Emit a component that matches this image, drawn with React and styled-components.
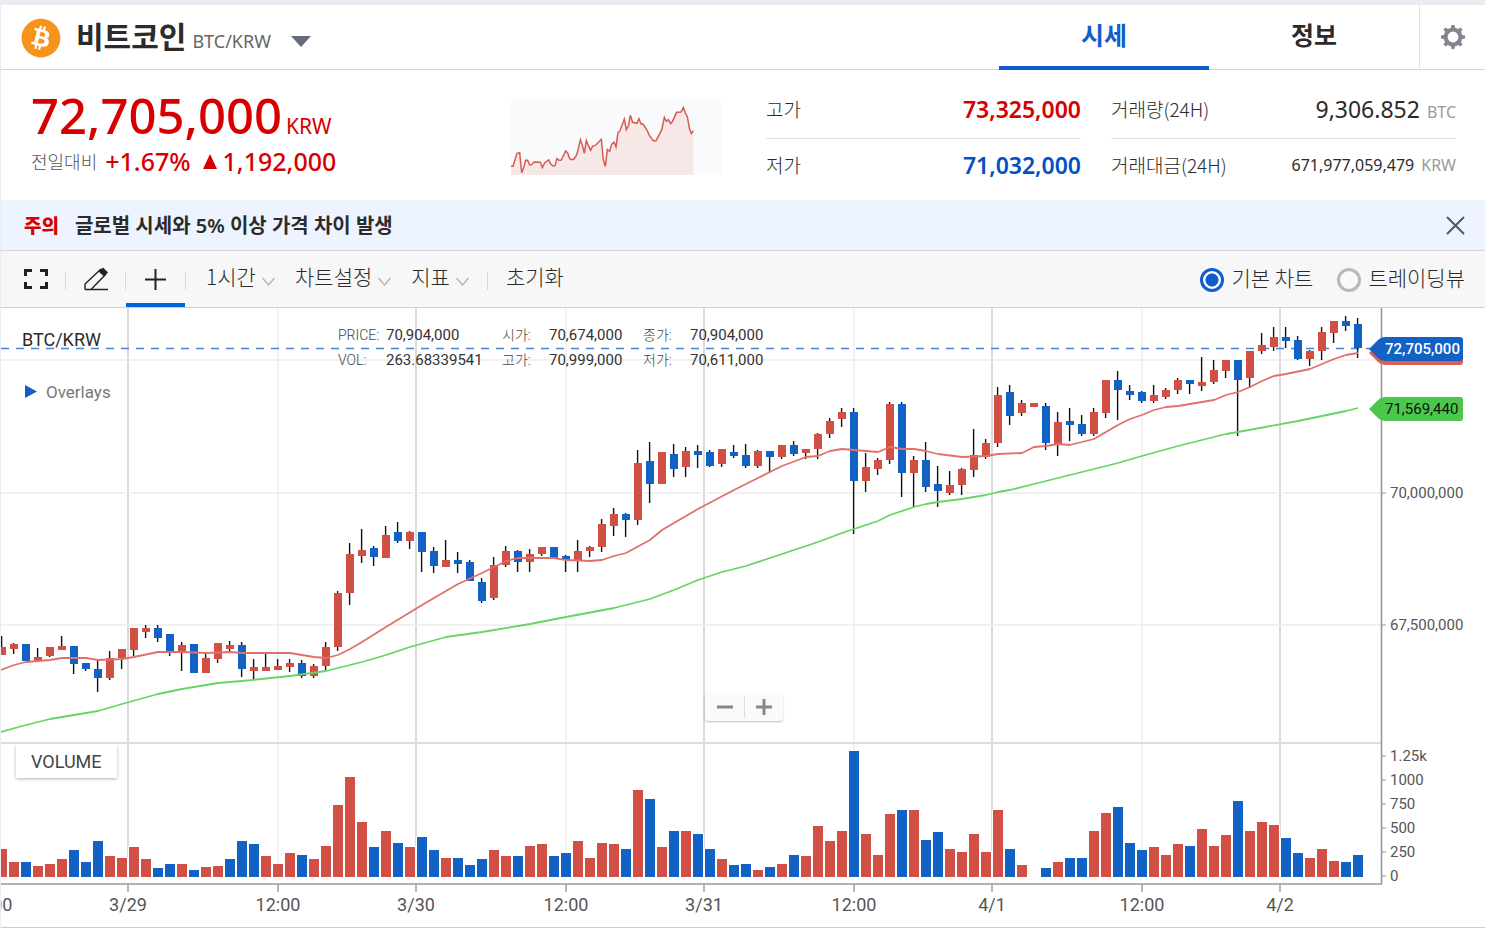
import React, { useState } from "react";
import styled, { createGlobalStyle } from "styled-components";
import { FaBitcoin } from "react-icons/fa";

const RED = "#d24f45";
const BLUE = "#1261c4";

const GlobalStyle = createGlobalStyle`
  * {
    box-sizing: border-box;
  }
  body {
    margin: 0;
    background: #e9ecf1;
    color: #2b2b2b;
    font-family: "Noto Sans", "Noto Sans CJK KR", sans-serif;
  }
  button, select, input {
    font: inherit;
    color: inherit;
    margin: 0;
  }
  button {
    padding: 0;
    border: 0;
    background: none;
    cursor: pointer;
  }
`;

const Page = styled.div`
  padding: 5px 0 0 1px;
`;

const Panel = styled.main`
  background: #fff;
  border-bottom: 1px solid #ccc;
`;

const Header = styled.header`
  display: flex;
  height: 65px;
  border-bottom: 1px solid #d4d4d6;
`;

const Coin = styled.div`
  flex: 1;
  display: flex;
  align-items: center;
  padding: 2px 0 0 20px;

  svg {
    flex: none;
  }
`;

const CoinName = styled.h1`
  display: flex;
  align-items: baseline;
  gap: 6px;
  margin: 0 0 0 15px;
  font: 700 30px/40px "Noto Sans CJK KR", sans-serif;

  span {
    font: 400 18px/40px "Noto Sans", sans-serif;
    color: #666;
  }
`;

const CoinMenu = styled.button`
  display: flex;
  margin: 6px 0 0 20px;
`;

const Tabs = styled.nav`
  display: flex;
`;

const Tab = styled.a`
  width: 210px;
  height: 65px;
  font: 700 25px/59px "Noto Sans CJK KR", sans-serif;
  text-align: center;
  text-decoration: none;
  color: ${({ $active }) => ($active ? "#115dcb" : "#2b2b2b")};
  border-bottom: ${({ $active }) => ($active ? "4px solid #115dcb" : "0")};
`;

const Settings = styled.button`
  display: flex;
  align-items: center;
  justify-content: center;
  width: 66px;
  height: 63px;
  border-left: 1px solid #dfe0e6;
`;

const Summary = styled.section`
  display: flex;
  height: 130px;
  padding: 0 29px 0 30px;
`;

const Price = styled.div`
  flex: 1;
  padding-top: 15px;
  color: #d60000;
`;

const PriceNow = styled.div`
  display: flex;
  align-items: baseline;
  gap: 4px;
  font-size: 49px;
  font-weight: 500;
  line-height: 60px;

  span {
    font-size: 21px;
    font-weight: 400;
    line-height: 24px;
  }
`;

const PriceChange = styled.div`
  display: flex;
  align-items: center;
  gap: 8px;
  font-size: 25px;
  font-weight: 500;
  line-height: 32px;

  span {
    font: 300 18px/32px "Noto Sans CJK KR", sans-serif;
    color: #555;
  }
  b {
    display: flex;
    align-items: center;
    gap: 5px;
    margin-left: 3px;
    font-weight: 500;
  }
`;

const Spark = styled.svg`
  width: 210px;
  height: 75px;
  margin: 30px 45px 0 0;
  background: #f9fafc;
`;

const Stats = styled.dl`
  width: ${({ $wide }) => ($wide ? "345px" : "315px")};
  margin: 13px 0 0 ${({ $wide }) => ($wide ? "30px" : "0")};
`;

const Stat = styled.div`
  display: flex;
  justify-content: space-between;
  height: 55px;

  & + & {
    border-top: 1px solid #dfe0e6;
  }
  dt {
    font: 300 19px/51px "Noto Sans CJK KR", sans-serif;
  }
  dd {
    margin: 0;
    font-size: ${({ $small }) => ($small ? "16px" : "23px")};
    font-weight: ${({ $color }) => ($color ? 600 : 400)};
    line-height: 53px;
    color: ${({ $color }) => $color || "#2b2b2b"};
  }
  i {
    margin-left: 7px;
    font-size: 16px;
    font-style: normal;
    color: #999;
  }
`;

const Notice = styled.section`
  display: flex;
  align-items: center;
  gap: 16px;
  height: 51px;
  padding: 0 20px 0 23px;
  background: #eef4ff;
  border-bottom: 1px solid #d4d7dd;
  font-size: 19px;
  font-weight: 700;
  line-height: 50px;

  strong {
    padding-top: 2px;
    color: #d60000;
  }
  p {
    flex: 1;
    margin: 0;
    padding-top: 2px;
    font-size: 20px;
    font-weight: 600;
  }
  button {
    display: flex;
  }
`;

const Toolbar = styled.div`
  display: flex;
  align-items: center;
  height: 57px;
  padding: 0 20px 0 5px;
  background: #f7f7f7;
  border-bottom: 1px solid #d0d0d0;
  font: 300 21px/32px "Noto Sans CJK KR", sans-serif;
`;

const Tool = styled.button`
  display: flex;
  align-items: center;
  justify-content: center;
  width: 59px;
  height: 56px;
  padding-top: ${({ $active }) => ($active ? "4px" : "0")};
  border-bottom: ${({ $active }) => ($active ? "4px solid #0062df" : "0")};
`;

const Divider = styled.span`
  width: 1px;
  height: 18px;
  margin: 4px ${({ $gap }) => $gap || "0"} 0 0;
  background: #d9d9d9;
`;

const Menu = styled.div`
  display: flex;
  align-items: center;
  gap: 6px;
  margin-right: 20px;
  padding-bottom: 6px;

  select {
    appearance: none;
    padding: 0;
    border: 0;
    background: none;
    line-height: 32px;
  }
  svg {
    margin-top: 11px;
  }
`;

const MenuButton = styled.button`
  display: flex;
  align-items: center;
  gap: 6px;
  margin-right: ${({ $last }) => ($last ? "18px" : "20px")};
  padding-bottom: 6px;

  svg {
    margin-top: 11px;
  }
`;

const ChartTypes = styled.fieldset`
  flex: 1;
  display: flex;
  justify-content: flex-end;
  gap: 24px;
  margin: 0;
  padding: 0;
  border: 0;

  label {
    display: flex;
    align-items: center;
    gap: 7px;
  }
  span {
    padding-bottom: 4px;
  }
  input {
    appearance: none;
    width: 24px;
    height: 24px;
    margin-top: 2px;
    border: 3px solid #b9b9b9;
    border-radius: 50%;
    background: #f9f9f9;
  }
  input:checked {
    border-color: #115dcb;
    background: radial-gradient(circle, #115dcb 0 6px, #fff 7px);
  }
`;

const ChartArea = styled.section`
  position: relative;
  font-family: Roboto, "Noto Sans CJK KR", sans-serif;

  > svg {
    display: block;
    width: 100%;
    height: auto;
  }
`;

const ChartTitle = styled.div`
  position: absolute;
  left: 21px;
  top: 20px;
  font-size: 18px;
  line-height: 24px;
`;

const Overlays = styled.button`
  position: absolute;
  left: 24px;
  top: 72px;
  display: flex;
  align-items: center;
  gap: 9px;
  font-size: 17px;
  line-height: 24px;
  color: #777;
`;

const Readout = styled.dl`
  position: absolute;
  left: 337px;
  top: 15px;
  display: grid;
  grid-template-columns: 48px 116px 47px 94px 47px auto;
  margin: 0;
  line-height: 25px;

  dt {
    font-size: 14px;
    font-weight: 300;
    color: #444;
  }
  dd {
    margin: 0;
    font-size: 15px;
    color: #333;
  }
`;

const VolumeLabel = styled.div`
  position: absolute;
  left: 15px;
  top: 437px;
  padding: 0 15px;
  background: #fff;
  box-shadow: 0 1px 3px rgba(0, 0, 0, 0.3);
  clip-path: inset(0 -4px -4px -4px);
  font-size: 18px;
  line-height: 33px;
  color: #444;
`;

const Zoom = styled.div`
  position: absolute;
  left: 704px;
  top: 385px;
  display: flex;
  padding: 3px 0;
  border-radius: 3px;
  background: #fafafa;
  box-shadow: 0 1px 2px rgba(0, 0, 0, 0.25);

  button {
    display: flex;
    align-items: center;
    justify-content: center;
    width: 39px;
    height: 22px;
  }
  button + button {
    border-left: 1px solid #ddd;
  }
`;

// one entry per hour: high, body top, body bottom, low, direction
const candles = [
  [636, 647, 655, 655, "r"], [643, 644, 649, 654, "r"], [644, 644, 661, 661, "b"],
  [648, 657, 661, 661, "r"], [647, 647, 656, 657, "r"], [636, 646, 650, 650, "r"],
  [646, 646, 664, 674, "b"], [663, 663, 669, 671, "b"], [660, 669, 678, 692, "b"],
  [651, 658, 678, 680, "r"], [649, 649, 658, 669, "r"], [628, 628, 650, 656, "r"],
  [625, 628, 632, 638, "r"], [625, 628, 638, 642, "b"], [634, 634, 652, 656, "b"],
  [642, 645, 652, 671, "r"], [644, 644, 673, 673, "b"], [653, 658, 673, 673, "r"],
  [643, 643, 659, 663, "r"], [641, 645, 649, 652, "r"], [642, 645, 669, 677, "b"],
  [659, 667, 671, 679, "r"], [653, 667, 671, 671, "r"], [659, 666, 670, 670, "r"],
  [659, 663, 667, 672, "r"], [660, 663, 676, 678, "b"], [664, 666, 676, 678, "r"],
  [642, 647, 666, 671, "r"], [591, 593, 647, 651, "r"], [543, 554, 593, 605, "r"],
  [529, 550, 556, 563, "r"], [546, 548, 557, 566, "b"], [526, 535, 558, 558, "r"],
  [522, 532, 541, 543, "b"], [531, 532, 541, 549, "r"], [532, 532, 552, 572, "b"],
  [547, 551, 566, 573, "b"], [540, 560, 567, 567, "r"], [552, 560, 564, 573, "b"],
  [560, 562, 581, 581, "b"], [578, 582, 601, 603, "b"], [557, 565, 598, 600, "r"],
  [546, 551, 565, 567, "r"], [550, 551, 562, 572, "b"], [549, 554, 562, 572, "r"],
  [547, 547, 554, 556, "r"], [547, 547, 558, 558, "b"], [555, 556, 560, 572, "b"],
  [540, 551, 561, 572, "r"], [546, 547, 551, 557, "r"], [519, 524, 547, 552, "r"],
  [508, 514, 526, 536, "r"], [513, 514, 520, 537, "b"], [450, 463, 520, 525, "r"],
  [442, 461, 484, 503, "b"], [452, 452, 484, 484, "r"], [444, 454, 469, 477, "b"],
  [447, 451, 467, 477, "r"], [445, 451, 455, 468, "b"], [450, 452, 466, 467, "b"],
  [449, 449, 464, 467, "r"], [445, 452, 456, 458, "b"], [444, 455, 466, 468, "b"],
  [450, 451, 466, 468, "r"], [451, 451, 457, 472, "b"], [445, 445, 457, 459, "r"],
  [441, 445, 454, 456, "b"], [449, 449, 453, 459, "r"], [433, 434, 449, 459, "r"],
  [418, 421, 434, 438, "r"], [408, 412, 419, 427, "r"], [408, 412, 481, 534, "b"],
  [453, 467, 481, 492, "r"], [458, 460, 469, 475, "r"], [402, 404, 460, 464, "r"],
  [402, 404, 473, 497, "b"], [456, 460, 473, 507, "r"], [442, 460, 487, 492, "b"],
  [466, 484, 491, 507, "b"], [471, 485, 493, 495, "r"], [468, 469, 485, 495, "r"],
  [429, 455, 470, 477, "r"], [439, 443, 457, 459, "r"], [387, 395, 443, 447, "r"],
  [385, 392, 416, 425, "b"], [400, 403, 413, 416, "r"], [403, 403, 407, 407, "r"],
  [403, 406, 443, 450, "b"], [412, 422, 444, 456, "r"], [408, 421, 425, 441, "b"],
  [415, 424, 434, 436, "b"], [408, 412, 434, 436, "r"], [380, 380, 413, 418, "r"],
  [371, 380, 390, 420, "b"], [385, 391, 395, 400, "b"], [391, 392, 401, 403, "b"],
  [385, 395, 401, 403, "r"], [388, 390, 397, 399, "r"], [378, 380, 390, 394, "r"],
  [380, 380, 384, 394, "b"], [357, 382, 386, 391, "r"], [360, 370, 382, 384, "r"],
  [360, 360, 371, 378, "r"], [360, 360, 380, 436, "b"], [351, 351, 378, 388, "r"],
  [333, 345, 351, 354, "r"], [327, 337, 347, 351, "r"], [327, 337, 341, 348, "b"],
  [336, 340, 359, 360, "b"], [350, 351, 359, 366, "r"], [327, 332, 351, 360, "r"],
  [321, 321, 333, 343, "r"], [316, 321, 326, 331, "b"], [318, 324, 348, 358, "b"],
];

const volumeTops = [
  849, 862, 862, 866, 864, 859, 850, 862, 841, 856, 858, 847, 859, 868, 864, 864,
  870, 867, 866, 859, 841, 844, 856, 864, 853, 855, 859, 846, 805, 777, 822, 847,
  831, 843, 847, 837, 850, 858, 858, 865, 859, 850, 856, 856, 846, 844, 856, 853,
  841, 858, 843, 844, 849, 790, 799, 847, 831, 831, 834, 849, 859, 865, 864, 870,
  867, 864, 855, 856, 826, 841, 831, 751, 834, 855, 814, 810, 810, 840, 832, 849,
  852, 834, 852, 810, 849, 865, 877, 868, 862, 858, 858, 831, 813, 807, 843, 850,
  847, 855, 844, 846, 829, 846, 835, 801, 831, 822, 825, 838, 853, 858, 849, 861,
  862, 855,
];

const volumeSides =
  "rrbrrrbbbrrrrbbrbrrbbbrrrbrrrrrbrbrbbrbbbrrbrrbbrrrrbrbrbrbbrbbrbrbrrrrbrrrbrbbrrrrrbrrbrbbrrbbbrrrbrrrbrrrbbrrrbb";

const shortAverage =
  "1,670 14,665 26,662 50,660 62,658 86,658 98,660 122,659 134,657 158,652 182,652 206,653 230,652 242,653 290,653 302,655 314,657 326,658 338,655 350,649 362,642 386,627 422,605 458,584 482,573 494,567 506,561 518,558 554,558 566,560 590,561 602,560 614,556 626,553 650,540 662,530 698,509 734,490 758,478 782,466 806,457 818,456 830,451 842,449 866,451 878,452 890,447 902,449 914,449 926,451 938,454 962,457 986,456 998,454 1022,453 1034,447 1046,446 1058,444 1070,445 1082,442 1094,439 1118,425 1130,419 1142,415 1154,410 1166,407 1178,406 1190,404 1214,400 1226,395 1238,392 1250,387 1262,381 1274,376 1286,374 1310,369 1334,359 1346,355 1358,353";

const longAverage =
  "1,732 26,725 50,719 98,711 122,704 158,694 182,689 218,683 242,681 290,676 326,671 338,668 362,662 386,655 410,647 446,637 482,632 530,624 566,617 614,608 650,599 674,590 698,580 722,572 746,566 770,558 794,550 818,542 842,533 866,525 878,521 890,515 914,507 926,504 938,502 962,499 986,495 998,492 1010,490 1034,484 1070,475 1094,469 1118,463 1142,456 1178,446 1226,434 1238,432 1298,421 1346,411 1358,408";

const sparkLine =
  "33,259 39,259 51,220 59,218 65,278 71,263 77,241 83,241 89,255 95,254 102,246 121,247 127,263 134,249 146,240 152,252 159,258 165,257 171,236 177,241 184,240 197,213 203,219 209,236 215,239 222,237 229,226 234,211 241,179 247,196 253,220 259,181 265,197 272,211 278,198 285,197 304,178 310,240 316,259 322,209 329,214 335,193 342,186 348,201 354,158 360,152 373,117 379,149 386,136 391,106 398,127 411,130 417,116 423,132 429,132 441,150 448,166 460,182 468,182 480,160 486,146 493,112 499,124 505,119 512,131 518,123 530,97 543,96 550,83 556,99 562,110 568,144 574,161 580,152";

const times = [
  [-10, "12:00"], [128, "3/29"], [278, "12:00"], [416, "3/30"], [566, "12:00"],
  [704, "3/31"], [854, "12:00"], [992, "4/1"], [1142, "12:00"], [1280, "4/2"],
];

const levels = [
  [493, "70,000,000"], [625, "67,500,000"], [756, "1.25k"], [780, "1000"],
  [804, "750"], [828, "500"], [852, "250"], [876, "0"],
];

const readout = [
  ["PRICE:", "70,904,000"], ["시가:", "70,674,000"], ["종가:", "70,904,000"],
  ["VOL:", "263.68339541"], ["고가:", "70,999,000"], ["저가:", "70,611,000"],
];

const Chevron = () => (
  <svg width="13" height="9" viewBox="0 0 13 9" fill="none" stroke="#b3b3b3">
    <path d="M.5 1l6 7 6-7" strokeWidth="1.3" />
  </svg>
);

const Gear = () => (
  <svg width="24" height="24" viewBox="-12 -12 24 24" fill="none" stroke="#84868f">
    <circle r="7.4" strokeWidth="4" />
    {[0, 45, 90, 135, 180, 225, 270, 315].map((angle) => (
      <path
        key={angle}
        d="M-2.2 -8.5L-1.5 -12H1.5L2.2 -8.5Z"
        fill="#84868f"
        stroke="none"
        transform={`rotate(${angle})`}
      />
    ))}
  </svg>
);

const Tag = ({ y, color, textColor, bold, children }) => (
  <g transform={`translate(1369 ${y})`}>
    <path
      d="M0 0L9 -9Q12 -12 16 -12H91Q94 -12 94 -9V9Q94 12 91 12H16Q12 12 9 9Z"
      fill={color}
    />
    <text x="16" y="5" fontSize="15" fontWeight={bold ? 500 : 400} fill={textColor}>
      {children}
    </text>
  </g>
);

const PriceChart = () => (
  <svg viewBox="1 308 1484 619" role="img" aria-label="BTC/KRW">
    {times.map(([x, label]) => (
      <path
        key={x}
        d={`M${x} 308V877`}
        stroke={label === "12:00" ? "#ededed" : "#cbcbcb"}
        strokeWidth="1.4"
      />
    ))}
    <path d="M1 360H1381M1 493H1381M1 625H1381" stroke="#ededed" strokeWidth="1.4" />
    <path d="M1 743H1381" stroke="#ddd" strokeWidth="2" />
    <path
      d="M1 348.5H1370"
      stroke="#4585d8"
      strokeWidth="1.4"
      strokeDasharray="8 7"
    />
    {candles.map(([high, top, bottom, low, side], i) => {
      const x = 2 + 12 * i;
      return (
        <g key={x}>
          <path d={`M${x - 0.4} ${high}V${low}`} stroke="#111" strokeWidth="1.4" />
          <rect
            x={x - 4}
            y={top}
            width="8"
            height={bottom - top}
            fill={side === "r" ? RED : BLUE}
          />
        </g>
      );
    })}
    <g fill="none" strokeWidth="1.8" strokeLinejoin="round">
      <polyline points={longAverage} stroke="#66d466" />
      <polyline points={shortAverage} stroke="#e0706a" />
    </g>
    {volumeTops.map((top, i) => (
      <rect
        key={i}
        x={-3 + 12 * i}
        y={top}
        width="10"
        height={877 - top}
        fill={volumeSides[i] === "r" ? RED : BLUE}
        stroke="#fff"
        strokeWidth={top < 877 ? 2 : 0}
        style={{ paintOrder: "stroke" }}
      />
    ))}
    <path d="M1381.5 308V884M1 884H1382" stroke="#999" strokeWidth="1.6" />
    <g fontSize="18" fill="#555" textAnchor="middle">
      {times.map(([x, label]) => (
        <React.Fragment key={x}>
          <path d={`M${x} 884V892`} stroke="#999" strokeWidth="1.4" />
          <text x={x} y="911">{label}</text>
        </React.Fragment>
      ))}
    </g>
    <g fontSize="15" fill="#555">
      {levels.map(([y, label]) => (
        <React.Fragment key={y}>
          <path d={`M1382 ${y}H1386`} stroke="#999" />
          <text x="1390" y={y + 5}>{label}</text>
        </React.Fragment>
      ))}
    </g>
    <Tag y={353} color="#dd5e56" />
    <Tag y={349} color={BLUE} textColor="#fff" bold>72,705,000</Tag>
    <Tag y={409} color="#4bc84b" textColor="#111">71,569,440</Tag>
  </svg>
);

const App = () => {
  const [chart, setChart] = useState("basic");

  return (
    <Page>
      <GlobalStyle />
      <Panel>
        <Header>
          <Coin>
            <FaBitcoin size={40} color="#f7931a" />
            <CoinName>
              비트코인 <span>BTC/KRW</span>
            </CoinName>
            <CoinMenu aria-label="마켓 선택">
              <svg width="20" height="11" viewBox="0 0 20 11">
                <path d="M0 0H20L10 11Z" fill="#656b7b" />
              </svg>
            </CoinMenu>
          </Coin>
          <Tabs>
            <Tab href="#price" $active>시세</Tab>
            <Tab href="#info">정보</Tab>
          </Tabs>
          <Settings aria-label="설정">
            <Gear />
          </Settings>
        </Header>

        <Summary>
          <Price>
            <PriceNow>
              72,705,000<span>KRW</span>
            </PriceNow>
            <PriceChange>
              <span>전일대비</span>
              +1.67%
              <b>
                <svg width="16" height="15" viewBox="0 0 16 15">
                  <path d="M8 0L15 15H1Z" fill="#d60000" />
                </svg>
                1,192,000
              </b>
            </PriceChange>
          </Price>
          <Spark viewBox="33 60 630 225">
            <polygon points={`${sparkLine} 580,285 33,285`} fill="#f5e8e7" />
            <polyline points={sparkLine} fill="none" stroke="#d75a50" strokeWidth="4.5" />
          </Spark>
          <Stats>
            <Stat $color="#d60000">
              <dt>고가</dt>
              <dd>73,325,000</dd>
            </Stat>
            <Stat $color="#0051c7">
              <dt>저가</dt>
              <dd>71,032,000</dd>
            </Stat>
          </Stats>
          <Stats $wide>
            <Stat>
              <dt>거래량(24H)</dt>
              <dd>
                9,306.852<i>BTC</i>
              </dd>
            </Stat>
            <Stat $small>
              <dt>거래대금(24H)</dt>
              <dd>
                671,977,059,479<i>KRW</i>
              </dd>
            </Stat>
          </Stats>
        </Summary>

        <Notice>
          <strong>주의</strong>
          <p>글로벌 시세와 5% 이상 가격 차이 발생</p>
          <button aria-label="닫기">
            <svg width="19" height="19" viewBox="0 0 19 19" stroke="#555" strokeWidth="2">
              <path d="M1 1L18 18M18 1L1 18" />
            </svg>
          </button>
        </Notice>

        <Toolbar>
          <Tool aria-label="전체화면">
            <svg width="24" height="20" viewBox="0 0 24 20" fill="none" stroke="#222" strokeWidth="3">
              <path d="M8 1.5H1.5V7M16 1.5H22.5V7M8 18.5H1.5V13M16 18.5H22.5V13" />
            </svg>
          </Tool>
          <Divider />
          <Tool aria-label="그리기">
            <svg width="24" height="24" viewBox="0 0 24 24" fill="none" stroke="#222" strokeWidth="1.4">
              <path d="M1 22.5V17L16.500 2.500L21.500 7.500L7 22.500M1 22.500H24M1 22.500L7 22.500" />
              <path d="M14.500 4.500L19 .5L24 5.500L20 9.500Z" fill="#222" stroke="none" />
            </svg>
          </Tool>
          <Divider />
          <Tool aria-label="십자선" $active>
            <svg width="21" height="21" viewBox="0 0 21 21" stroke="#222" strokeWidth="2">
              <path d="M0 10.5H21M10.500 0V21" />
            </svg>
          </Tool>
          <Divider $gap="20px" />
          <Menu>
            <select aria-label="시간 간격" defaultValue="1h">
              <option value="1h">1시간</option>
              <option value="1d">1일</option>
            </select>
            <Chevron />
          </Menu>
          <MenuButton>
            차트설정
            <Chevron />
          </MenuButton>
          <MenuButton $last>
            지표
            <Chevron />
          </MenuButton>
          <Divider $gap="18px" />
          <MenuButton>초기화</MenuButton>
          <ChartTypes>
            <label>
              <input
                type="radio"
                name="chart"
                checked={chart === "basic"}
                onChange={() => setChart("basic")}
              />
              <span>기본 차트</span>
            </label>
            <label>
              <input
                type="radio"
                name="chart"
                checked={chart === "trading"}
                onChange={() => setChart("trading")}
              />
              <span>트레이딩뷰</span>
            </label>
          </ChartTypes>
        </Toolbar>

        <ChartArea>
          <PriceChart />
          <ChartTitle>BTC/KRW</ChartTitle>
          <Overlays>
            <svg width="12" height="14" viewBox="0 0 12 14">
              <path d="M0 0L12 6.500L0 13Z" fill="#115dcb" />
            </svg>
            Overlays
          </Overlays>
          <Readout>
            {readout.map(([name, value], i) => (
              <React.Fragment key={i}>
                <dt>{name}</dt>
                <dd>{value}</dd>
              </React.Fragment>
            ))}
          </Readout>
          <Zoom>
            <button aria-label="축소">
              <svg width="16" height="16" viewBox="0 0 16 16" stroke="#888" strokeWidth="3">
                <path d="M0 8H16" />
              </svg>
            </button>
            <button aria-label="확대">
              <svg width="16" height="16" viewBox="0 0 16 16" stroke="#888" strokeWidth="3">
                <path d="M0 8H16M8 0V16" />
              </svg>
            </button>
          </Zoom>
          <VolumeLabel>VOLUME</VolumeLabel>
        </ChartArea>
      </Panel>
    </Page>
  );
};

export default App;
